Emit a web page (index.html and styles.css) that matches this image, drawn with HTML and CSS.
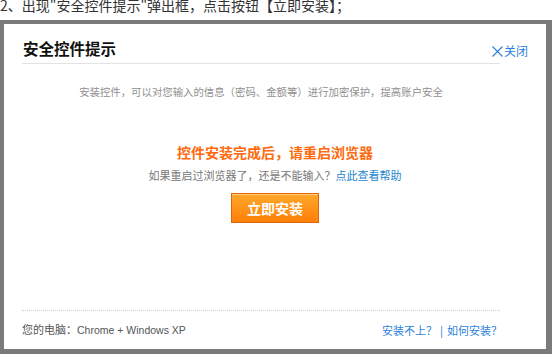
FILE: index.html
```html
<!DOCTYPE html>
<html lang="zh-CN">
<head>
<meta charset="utf-8">
<title>安全控件提示</title>
<link rel="stylesheet" href="styles.css">
</head>
<body>
<p class="caption">2、出现"安全控件提示"弹出框，点击按钮【立即安装】；</p>
<div class="dialog">
  <div class="dlg-head">
    <h2 class="dlg-title">安全控件提示</h2>
    <a class="dlg-close" href="#"><svg class="x-icon" width="11" height="11" viewBox="0 0 11 11"><path d="M0.5 0.5 L10.5 10.5 M10.5 0.5 L0.5 10.5" stroke="#2b7fdc" stroke-width="1.1" fill="none"/></svg>关闭</a>
  </div>
  <p class="desc">安装控件，可以对您输入的信息（密码、金额等）进行加密保护，提高账户安全</p>
  <div class="main">
    <p class="notice">控件安装完成后，请重启浏览器</p>
    <p class="help">如果重启过浏览器了，还是不能输入？<a class="help-link" href="#">点此查看帮助</a></p>
    <a class="install-btn" href="#">立即安装</a>
  </div>
  <div class="dlg-foot">
    <span class="env">您的电脑：<span class="latin">Chrome + Windows XP</span></span>
    <span class="foot-links"><a href="#">安装不上？</a><span class="sep">|</span><a href="#">如何安装？</a></span>
  </div>
</div>
</body>
</html>
```

FILE: styles.css
```css
* { box-sizing: border-box; }
html, body { margin: 0; padding: 0; background: #fff; }
body {
  width: 552px;
  height: 354px;
  overflow: hidden;
  font-family: "Noto Sans CJK SC", "Liberation Sans", sans-serif;
  color: #333;
}
a { text-decoration: none; }
p, h2 { margin: 0; }

.caption {
  font-size: 14px;
  line-height: 14px;
  height: 20px;
  margin-top: -2px;
  margin-bottom: 2px;
  color: #333;
  white-space: nowrap;
}

.dialog {
  width: 552px;
  height: 334px;
  border-style: solid;
  border-color: #7a7a7a;
  border-width: 4px 6px 5px 4px;
  background: #fff;
  display: flex;
  flex-direction: column;
}

.dlg-head {
  margin: 0 46px 0 18px;
  padding: 13px 0 4px 1px;
  border-bottom: 1px solid #e3e3e3;
  display: flex;
  justify-content: space-between;
  align-items: flex-end;
}
.dlg-title {
  font-size: 15.5px;
  line-height: 22px;
  font-weight: bold;
  color: #111;
}
.dlg-close {
  margin-right: -28px;
  font-size: 12px;
  line-height: 16px;
  color: #2b7fdc;
  display: flex;
  align-items: center;
  gap: 1px;
}
.x-icon { display: block; }

.desc {
  margin: 20px 46px 0 18px;
  text-align: center;
  font-size: 10.4px;
  line-height: 16px;
  color: #8f8f8f;
}

.main {
  display: flex;
  flex-direction: column;
  align-items: center;
}
.notice {
  margin-top: 42px;
  font-size: 14px;
  line-height: 20px;
  font-weight: bold;
  color: #ff6a0e;
}
.help {
  margin-top: 5px;
  font-size: 11px;
  line-height: 16px;
  color: #777;
}
.help-link { color: #1c86cf; }
.install-btn {
  margin-top: 10px;
  width: 88px;
  height: 30px;
  display: flex;
  align-items: center;
  justify-content: center;
  border: 1px solid #e0660c;
  background: linear-gradient(#ffa82c, #ff7f08);
  box-shadow: inset 0 1px 0 rgba(255, 220, 160, 0.7);
  color: #fff;
  font-size: 14px;
  font-weight: bold;
}

.dlg-foot {
  margin: auto 46px 0 18px;
  border-top: 1px dotted #cfcfcf;
  padding: 10px 0 11px 0;
  display: flex;
  justify-content: space-between;
  align-items: center;
  font-size: 11px;
  line-height: 16px;
}
.env { color: #555; }
.latin { font-family: "Liberation Sans", sans-serif; font-size: 10.5px; }
.foot-links { display: flex; align-items: center; margin-right: -2px; }
.foot-links a { color: #2b7fdc; }
.sep { margin: 0 4px 0 3px; color: #2b7fdc; }
```
